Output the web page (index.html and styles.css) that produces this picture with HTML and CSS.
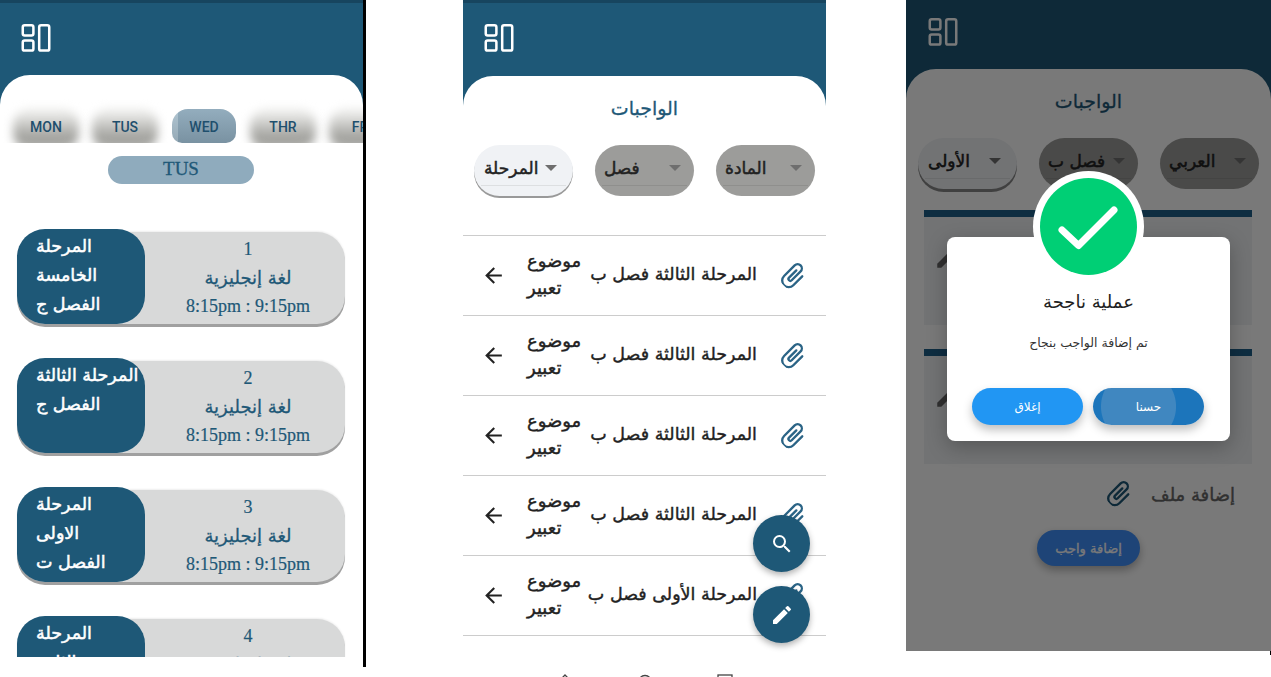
FILE: index.html
```html
<!DOCTYPE html>
<html lang="ar">
<head>
    <meta charset="UTF-8">
    <meta name="viewport" content="width=device-width, initial-scale=1.0">
    <title>الواجبات</title>
    <link rel="stylesheet" href="styles.css">
</head>
<body>
<div class="screens">

    <!-- schedule -->
    <section class="phone phone-schedule">
        <div class="viewport">
            <header class="topbar">
                <svg class="grid-icon" viewBox="0 0 30 30"><rect x="1.300" y="1.300" width="11" height="10.500" rx="2"/><rect x="1.300" y="17" width="11" height="10.500" rx="2"/><rect x="18.300" y="1.300" width="10.400" height="26.200" rx="2"/></svg>
            </header>
            <main class="sheet">
                <div class="days">
                    <div class="day">MON</div>
                    <div class="day">TUS</div>
                    <div class="day day-active">WED</div>
                    <div class="day">THR</div>
                    <div class="day">FRI</div>
                </div>
                <div class="day-label">TUS</div>

                <div class="card">
                    <div class="card-side">المرحلة<br>الخامسة<br>الفصل ج</div>
                    <div class="card-info"><span>1</span><span class="card-subject">لغة إنجليزية</span><span>8:15pm : 9:15pm</span></div>
                </div>
                <div class="card">
                    <div class="card-side">المرحلة الثالثة<br>الفصل ج</div>
                    <div class="card-info"><span>2</span><span class="card-subject">لغة إنجليزية</span><span>8:15pm : 9:15pm</span></div>
                </div>
                <div class="card">
                    <div class="card-side">المرحلة<br>الاولى<br>الفصل ت</div>
                    <div class="card-info"><span>3</span><span class="card-subject">لغة إنجليزية</span><span>8:15pm : 9:15pm</span></div>
                </div>
                <div class="card">
                    <div class="card-side">المرحلة<br>الثانية<br>الفصل ت</div>
                    <div class="card-info"><span>4</span><span class="card-subject">لغة إنجليزية</span><span>8:15pm : 9:15pm</span></div>
                </div>
            </main>
        </div>
    </section>

    <!-- homework list -->
    <section class="phone phone-list">
        <header class="topbar">
            <svg class="grid-icon" viewBox="0 0 30 30"><rect x="1.300" y="1.300" width="11" height="10.500" rx="2"/><rect x="1.300" y="17" width="11" height="10.500" rx="2"/><rect x="18.300" y="1.300" width="10.400" height="26.200" rx="2"/></svg>
        </header>
        <main class="sheet">
            <h2 class="sheet-title">الواجبات</h2>
            <div class="filters">
                <div class="filter filter-open"><span>المرحلة</span><span class="caret"></span></div>
                <div class="filter"><span>فصل</span><span class="caret"></span></div>
                <div class="filter"><span>المادة</span><span class="caret"></span></div>
            </div>
            <ul class="rows">
                <li class="row">
                    <svg class="arrow" viewBox="0 0 24 24"><path d="M20 11H7.830l5.590-5.590L12 4l-8 8 8 8 1.410-1.410L7.830 13H20v-2z"/></svg>
                    <div class="row-topic">موضوع<br>تعبير</div>
                    <div class="row-class">المرحلة الثالثة فصل ب</div>
                    <svg class="clip" viewBox="0 0 30 30"><path d="M21.500 9V22.500a7 7 0 0 1-14 0V6.500a4.500 4.500 0 0 1 9 0V20a2 2 0 0 1-4 0V9"/></svg>
                </li>
                <li class="row">
                    <svg class="arrow" viewBox="0 0 24 24"><path d="M20 11H7.830l5.590-5.590L12 4l-8 8 8 8 1.410-1.410L7.830 13H20v-2z"/></svg>
                    <div class="row-topic">موضوع<br>تعبير</div>
                    <div class="row-class">المرحلة الثالثة فصل ب</div>
                    <svg class="clip" viewBox="0 0 30 30"><path d="M21.500 9V22.500a7 7 0 0 1-14 0V6.500a4.500 4.500 0 0 1 9 0V20a2 2 0 0 1-4 0V9"/></svg>
                </li>
                <li class="row">
                    <svg class="arrow" viewBox="0 0 24 24"><path d="M20 11H7.830l5.590-5.590L12 4l-8 8 8 8 1.410-1.410L7.830 13H20v-2z"/></svg>
                    <div class="row-topic">موضوع<br>تعبير</div>
                    <div class="row-class">المرحلة الثالثة فصل ب</div>
                    <svg class="clip" viewBox="0 0 30 30"><path d="M21.500 9V22.500a7 7 0 0 1-14 0V6.500a4.500 4.500 0 0 1 9 0V20a2 2 0 0 1-4 0V9"/></svg>
                </li>
                <li class="row">
                    <svg class="arrow" viewBox="0 0 24 24"><path d="M20 11H7.830l5.590-5.590L12 4l-8 8 8 8 1.410-1.410L7.830 13H20v-2z"/></svg>
                    <div class="row-topic">موضوع<br>تعبير</div>
                    <div class="row-class">المرحلة الثالثة فصل ب</div>
                    <svg class="clip" viewBox="0 0 30 30"><path d="M21.500 9V22.500a7 7 0 0 1-14 0V6.500a4.500 4.500 0 0 1 9 0V20a2 2 0 0 1-4 0V9"/></svg>
                </li>
                <li class="row">
                    <svg class="arrow" viewBox="0 0 24 24"><path d="M20 11H7.830l5.590-5.590L12 4l-8 8 8 8 1.410-1.410L7.830 13H20v-2z"/></svg>
                    <div class="row-topic">موضوع<br>تعبير</div>
                    <div class="row-class">المرحلة الأولى فصل ب</div>
                    <svg class="clip" viewBox="0 0 30 30"><path d="M21.500 9V22.500a7 7 0 0 1-14 0V6.500a4.500 4.500 0 0 1 9 0V20a2 2 0 0 1-4 0V9"/></svg>
                </li>
            </ul>
            <nav class="bottom-nav">
                <svg viewBox="0 0 16 16"><path d="M8 1l6 6H2z"/></svg>
                <svg viewBox="0 0 16 16"><circle cx="8" cy="8" r="6.500"/></svg>
                <svg viewBox="0 0 16 16"><rect x="1" y="1" width="14" height="12"/></svg>
            </nav>
        </main>
        <div class="fabs">
            <button class="fab"><svg viewBox="0 0 24 24"><path d="M15.500 14h-.790l-.280-.270A6.470 6.470 0 0 0 16 9.500 6.500 6.500 0 1 0 9.500 16c1.610 0 3.090-.590 4.230-1.570l.270.280v.790l5 4.990L20.490 19l-4.990-5zm-6 0C7.010 14 5 11.990 5 9.500S7.010 5 9.500 5 14 7.010 14 9.500 11.990 14 9.500 14z"/></svg></button>
            <button class="fab"><svg viewBox="0 0 24 24"><path d="M3 17.250V21h3.750L17.810 9.940l-3.750-3.750L3 17.250zM20.710 7.040a1 1 0 0 0 0-1.410l-2.340-2.340a1 1 0 0 0-1.410 0l-1.830 1.830 3.750 3.750 1.830-1.830z"/></svg></button>
        </div>
    </section>

    <!-- add homework, success dialog on top -->
    <section class="phone phone-dialog">
        <div class="viewport">
            <header class="topbar">
                <svg class="grid-icon" viewBox="0 0 30 30"><rect x="1.300" y="1.300" width="11" height="10.500" rx="2"/><rect x="1.300" y="17" width="11" height="10.500" rx="2"/><rect x="18.300" y="1.300" width="10.400" height="26.200" rx="2"/></svg>
            </header>
            <main class="sheet">
                <h2 class="sheet-title">الواجبات</h2>
                <div class="filters">
                    <div class="filter filter-open"><span>الأولى</span><span class="caret"></span></div>
                    <div class="filter"><span>فصل ب</span><span class="caret"></span></div>
                    <div class="filter"><span>العربي</span><span class="caret"></span></div>
                </div>
                <div class="field">
                    <svg class="field-pen" viewBox="0 0 24 24"><path d="M3 17.250V21h3.750L17.810 9.940l-3.750-3.750L3 17.250z"/></svg>
                </div>
                <div class="field field-tall">
                    <svg class="field-pen" viewBox="0 0 24 24"><path d="M3 17.250V21h3.750L17.810 9.940l-3.750-3.750L3 17.250z"/></svg>
                </div>
                <div class="attach">
                    <svg class="clip clip-dark" viewBox="0 0 30 30"><path d="M21.500 9V22.500a7 7 0 0 1-14 0V6.500a4.500 4.500 0 0 1 9 0V20a2 2 0 0 1-4 0V9"/></svg>
                    <span>إضافة ملف</span>
                </div>
                <button class="submit">إضافة واجب</button>
            </main>
            <div class="scrim"></div>
            <div class="dialog">
                <div class="dialog-badge">
                    <svg viewBox="0 0 97 97"><path d="M22 52 L38.500 67.500 L74 32" fill="none" stroke="#fff" stroke-width="7" stroke-linecap="round" stroke-linejoin="round"/></svg>
                </div>
                <h3 class="dialog-title">عملية ناجحة</h3>
                <p class="dialog-text">تم إضافة الواجب بنجاح</p>
                <div class="dialog-actions">
                    <button class="dialog-btn">إغلاق</button>
                    <button class="dialog-btn dialog-btn-ok">حسنا</button>
                </div>
            </div>
        </div>
    </section>

</div>
</body>
</html>
```

FILE: styles.css
```css
* {
    box-sizing: border-box;
}
html, body {
    margin: 0;
    height: 677px;
    overflow: hidden;
    background-color: #fff;
}
body {
    font-family: "DejaVu Sans", "Noto Sans", sans-serif;
}
ul {
    list-style: none;
    margin: 0;
    padding: 0;
}
button {
    border: none;
    font-family: inherit;
}

.screens {
    display: flex;
    align-items: flex-start;
}
.phone {
    position: relative;
    width: 363px;
    flex: none;
}
.viewport {
    position: relative;
    overflow: hidden;
}

/* header + white sheet */
.topbar {
    height: 110px;
    padding: 21px 0 0 21px;
    background-color: #1e5877;
    border-top: 3px solid #17455f;
}
.grid-icon {
    display: block;
    width: 30px;
    height: 29px;
    fill: none;
    stroke: #fff;
    stroke-width: 2.600;
}
.sheet {
    margin-top: -35px;
    background-color: #fff;
    border-radius: 30px 30px 0 0;
    position: relative;
}

/* first phone */
.phone-schedule {
    border-right: 3px solid #000;
    width: 366px;
    height: 667px;
    margin-right: 97px;
}
.phone-schedule .viewport {
    height: 657px;
}
.days {
    position: relative;
    z-index: 0;
    display: flex;
    gap: 15px;
    height: 68px;
    padding: 34px 0 0 14px;
    overflow: hidden;
}
.day {
    position: relative;
    flex: none;
    width: 64px;
    height: 34px;
    font-family: Roboto, sans-serif;
    font-size: 14px;
    font-weight: 500;
    line-height: 36px;
    text-align: center;
    color: #1f4f6d;
}
.day::before {
    content: "";
    position: absolute;
    inset: 0 -1px -6px;
    z-index: -1;
    border-radius: 16px;
    background: linear-gradient(#ececea 10%, #a3a39f 70%);
    filter: blur(5px);
}
.day-active {
    border-radius: 16px 16px 10px 10px;
    background:
        linear-gradient(rgba(255, 255, 255, .08), rgba(0, 0, 0, .12)),
        linear-gradient(90deg, #a9c0ce 0 6px, #8aa6b8 6px);
}
.day-active::before {
    display: none;
}
.day-label {
    width: 146px;
    height: 28px;
    margin: 13px 0 0 108px;
    border-radius: 14px;
    background-color: #8fabbd;
    font-family: "Liberation Serif", serif;
    font-size: 19px;
    line-height: 26px;
    text-align: center;
    color: #1e5877;
    -webkit-text-stroke: 0.300px #1e5877;
}
.card {
    display: flex;
    width: 328px;
    height: 92px;
    margin: 48px 0 0 17px;
    border-radius: 28px;
    background-color: #d8d9d9;
    box-shadow: 0 3px 0 #a0a0a0, 0 -1px 2px #eee;
}
.card + .card {
    margin-top: 37px;
}
.card-side {
    flex: none;
    width: 128px;
    height: 95px;
    margin-top: -3px;
    padding: 3px 0 0 19px;
    border-radius: 28px;
    background-color: #1e5877;
    color: #fff;
    font-size: 17.500px;
    line-height: 29px;
    text-align: left;
    white-space: nowrap;
    -webkit-text-stroke: 0.500px #fff;
}
.card-info {
    flex: 1;
    display: flex;
    flex-direction: column;
    align-items: center;
    padding: 3px 0 0 6px;
    font-family: "Liberation Serif", serif;
    font-size: 18px;
    line-height: 28.500px;
    color: #1e5877;
    -webkit-text-stroke: 0.200px #1e5877;
}
.card-subject {
    font-family: "DejaVu Sans", sans-serif;
    font-size: 18px;
    -webkit-text-stroke: 0.300px #1e5877;
}

/* second phone */
.phone-list {
    height: 677px;
    margin-right: 80px;
    overflow: hidden;
}
.phone-list .topbar {
    height: 111px;
}
.sheet-title {
    margin: 0;
    padding-top: 21px;
    height: 69px;
    font-size: 19px;
    font-weight: normal;
    line-height: 22px;
    text-align: center;
    color: #1e5877;
    -webkit-text-stroke: 0.300px #1e5877;
}
.filters {
    display: flex;
    justify-content: space-between;
    padding: 0 11px;
}
.filter {
    position: relative;
    display: flex;
    align-items: center;
    justify-content: space-between;
    width: 99px;
    height: 51px;
    padding: 0 13px 5px 9px;
    border-radius: 26px;
    background-color: #9c9c9a;
    font-size: 17px;
    color: #222;
    white-space: nowrap;
    -webkit-text-stroke: 0.500px #222;
}
.filter::after {
    content: "";
    position: absolute;
    left: 7px;
    right: 7px;
    bottom: 10px;
    height: 1px;
    background-color: rgba(0, 0, 0, .08);
}
.filter-open {
    padding: 0 16px 5px 10px;
    background-color: #f0f2f5;
    box-shadow: 0 2px 0 #999;
}
.caret {
    flex: none;
    width: 0;
    height: 0;
    border-left: 6px solid transparent;
    border-right: 6px solid transparent;
    border-top: 6px solid #6e6e6e;
}
.rows {
    margin-top: 39px;
    border-top: 1px solid #ccc;
}
.row {
    display: flex;
    align-items: center;
    height: 80px;
    padding: 0 18px 0 18px;
    border-bottom: 1px solid #ccc;
}
.arrow {
    flex: none;
    width: 25px;
    height: 25px;
    margin-right: 21px;
    fill: #222;
}
.row-topic {
    flex: none;
    width: 56px;
    margin-bottom: 3px;
    font-size: 18px;
    line-height: 27px;
    color: #222;
    text-align: left;
    white-space: nowrap;
    -webkit-text-stroke: 0.400px #222;
}
.row-class {
    flex: 1;
    margin-bottom: 3px;
    font-size: 17.500px;
    color: #222;
    text-align: right;
    white-space: nowrap;
    -webkit-text-stroke: 0.400px #222;
}
.clip {
    flex: none;
    width: 28px;
    height: 28px;
    margin-left: 23px;
    fill: none;
    stroke: #2b6486;
    stroke-width: 2.500;
    stroke-linecap: round;
    transform: rotate(45deg);
}
.bottom-nav {
    display: flex;
    gap: 64px;
    margin-top: 38px;
    padding-left: 94px;
}
.bottom-nav svg {
    flex: none;
    width: 16px;
    height: 16px;
    fill: none;
    stroke: #444;
    stroke-width: 1.300;
}
.fabs {
    position: absolute;
    top: 515px;
    left: 290px;
    display: flex;
    flex-direction: column;
    gap: 14px;
}
.fab {
    display: flex;
    align-items: center;
    justify-content: center;
    width: 57px;
    height: 57px;
    padding: 0;
    border-radius: 50%;
    background-color: #1e5877;
    box-shadow: 0 3px 6px rgba(0, 0, 0, .3);
}
.fab svg {
    width: 24px;
    height: 24px;
    fill: #fff;
}

/* third phone */
.phone-dialog {
    width: 365px;
    height: 655px;
}
.phone-dialog::after {
    content: "";
    position: absolute;
    right: 0;
    bottom: 0;
    width: 1px;
    height: 4px;
    background-color: #000;
}
.phone-dialog .viewport {
    height: 651px;
}
.phone-dialog .topbar {
    border-top: 0;
    padding: 18px 0 0 22px;
    height: 104px;
}
.phone-dialog .filters {
    padding: 0 12px;
}
.phone-dialog .filter-open {
    box-shadow: 0 3px 0 #888;
}
.field {
    position: relative;
    width: 328px;
    height: 115px;
    margin: 21px 0 0 18px;
    background-color: #f0f3f4;
    border-top: 7px solid #1f5f8a;
}
.field-tall {
    margin-top: 24px;
}
.field-pen {
    position: absolute;
    top: 28px;
    left: 10px;
    width: 26px;
    height: 26px;
    fill: #666;
}
.attach {
    display: flex;
    align-items: center;
    justify-content: flex-end;
    gap: 17px;
    margin: 16px 36px 0 0;
    font-size: 18px;
    color: #666;
    -webkit-text-stroke: 0.400px #666;
}
.clip-dark {
    margin: 0;
    stroke: #1e5877;
}
.submit {
    display: block;
    width: 103px;
    height: 36px;
    margin: 22px 0 0 131px;
    border-radius: 18px;
    background-color: #3f90fa;
    color: #fff;
    font-size: 13px;
    box-shadow: 0 4px 8px rgba(0, 0, 0, .3);
    -webkit-text-stroke: 0.300px #fff;
}
.phone-dialog .sheet {
    height: 600px;
}
.scrim {
    position: absolute;
    inset: 0;
    background-color: rgba(0, 0, 0, .525);
}
.dialog {
    position: absolute;
    top: 237px;
    left: 41px;
    width: 283px;
    height: 204px;
    padding-top: 54px;
    border-radius: 8px;
    background-color: #fff;
    text-align: center;
    box-shadow: 0 6px 20px rgba(0, 0, 0, .25);
}
.dialog-badge {
    position: absolute;
    top: -66px;
    left: 86px;
    width: 111px;
    height: 111px;
    padding: 7px;
    border-radius: 50%;
    background-color: #fff;
}
.dialog-badge svg {
    display: block;
    width: 97px;
    height: 97px;
    border-radius: 50%;
    background-color: #00cf75;
}
.dialog-title {
    margin: 0;
    font-size: 18px;
    font-weight: normal;
    line-height: 22px;
    color: #222;
}
.dialog-text {
    margin: 21px 0 0;
    font-size: 12.500px;
    line-height: 18px;
    color: #333;
}
.dialog-actions {
    position: absolute;
    left: 25px;
    top: 151px;
    display: flex;
    gap: 10px;
}
.dialog-btn {
    width: 111px;
    height: 37px;
    border-radius: 19px;
    background-color: #2196f3;
    color: #fff;
    font-size: 12px;
    box-shadow: 0 5px 10px rgba(0, 0, 0, .25);
}
.dialog-btn-ok {
    background: radial-gradient(circle at 41% 50%, #4087c0 0 37px, #1c75bb 38px);
}
```
